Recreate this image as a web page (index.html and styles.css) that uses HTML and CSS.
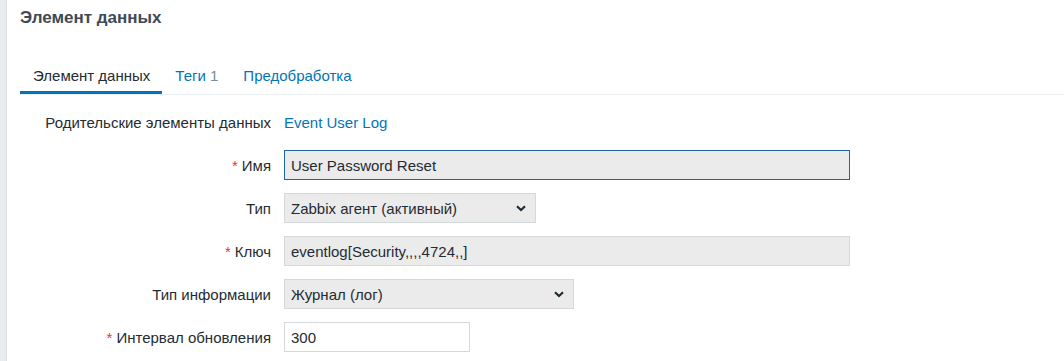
FILE: index.html
```html
<!DOCTYPE html>
<html lang="ru">
<head>
<meta charset="utf-8">
<title>Элемент данных</title>
<link rel="stylesheet" href="styles.css">
</head>
<body>
<div class="layout">
  <aside class="sidebar"></aside>
  <main class="main">
    <h1 class="title">Элемент данных</h1>
    <nav class="tabs">
      <a class="tab tab-active">Элемент данных</a>
      <a class="tab">Теги <span class="count">1</span></a>
      <a class="tab">Предобработка</a>
    </nav>
    <form class="form">
      <div class="label">Родительские элементы данных</div>
      <div class="field"><a class="link">Event User Log</a></div>

      <div class="label"><span class="req">*</span> Имя</div>
      <div class="field"><div class="input input-focus w-full">User Password Reset</div></div>

      <div class="label">Тип</div>
      <div class="field"><div class="select w-type">Zabbix агент (активный)<svg class="chev" viewBox="0 0 10 7" width="10" height="7"><path d="M1 1.2 L5 5 L9 1.2" fill="none" stroke="#1f2c33" stroke-width="2.2"/></svg></div></div>

      <div class="label"><span class="req">*</span> Ключ</div>
      <div class="field"><div class="input w-full">eventlog[Security,,,,4724,,]</div></div>

      <div class="label">Тип информации</div>
      <div class="field"><div class="select w-info">Журнал (лог)<svg class="chev" viewBox="0 0 10 7" width="10" height="7"><path d="M1 1.2 L5 5 L9 1.2" fill="none" stroke="#1f2c33" stroke-width="2.2"/></svg></div></div>

      <div class="label"><span class="req">*</span> Интервал обновления</div>
      <div class="field"><div class="input input-white w-int">300</div></div>
    </form>
  </main>
</div>
</body>
</html>
```

FILE: styles.css
```css
html, body {
  margin: 0;
  padding: 0;
  background: #ffffff;
  font-family: "Liberation Sans", Arial, sans-serif;
  color: #1f2c33;
}

.layout {
  display: flex;
  min-height: 361px;
}

.sidebar {
  width: 6px;
  flex: 0 0 6px;
  background: #e8ecef;
  border-right: 1px solid #d9dee2;
}

.main {
  flex: 1;
  padding-left: 13px;
}

.title {
  margin: 0;
  padding-top: 8px;
  font-size: 17px;
  line-height: 20px;
  font-weight: bold;
  color: #3d4a55;
}

.tabs {
  display: flex;
  margin-top: 28px;
  border-bottom: 1px solid #ebeef0;
}

.tab {
  padding: 11px 12px 6px 13px;
  font-size: 15px;
  line-height: 18px;
  color: #0275b8;
  border-bottom: 3px solid transparent;
}

.tab-active {
  color: #1f2c33;
  border-bottom-color: #0275b8;
}

.count {
  color: #768d99;
}

.form {
  display: grid;
  grid-template-columns: 251px auto;
  column-gap: 13px;
  row-gap: 13px;
  padding-top: 12px;
  font-size: 15px;
}

.label {
  height: 30px;
  display: flex;
  align-items: center;
  justify-content: flex-end;
  text-align: right;
  white-space: nowrap;
}

.req {
  color: #e33734;
  margin-right: 4px;
}

.field {
  height: 30px;
  display: flex;
  align-items: center;
}

.link {
  color: #0275b8;
}

.input, .select {
  box-sizing: border-box;
  height: 30px;
  display: flex;
  align-items: center;
  padding: 0 6px;
  background: #ebebeb;
  border: 1px solid #d4d9dc;
  color: #1f2c33;
  white-space: nowrap;
}

.input-focus {
  border-color: #1f65a6;
}

.input-white {
  background: #ffffff;
}

.select {
  justify-content: space-between;
  padding-right: 9px;
}

.chev {
  display: block;
}

.w-full { width: 566px; }
.w-type { width: 252px; }
.w-info { width: 290px; }
.w-int { width: 186px; }
```
